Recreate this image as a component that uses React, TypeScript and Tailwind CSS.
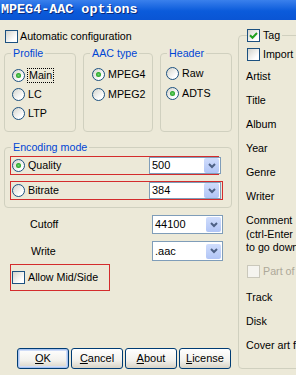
import React from "react";
import clsx from "clsx";

// Small XP-style controls
function Radio({ checked }: { checked?: boolean }) {
    return (
        <span className="flex h-[13px] w-[13px] shrink-0 items-center justify-center rounded-full border border-[#1c5180] bg-[linear-gradient(135deg,#d4d4cc,#ffffff_75%)]">
            {checked && (
                <span className="h-[5px] w-[5px] rounded-full bg-[radial-gradient(circle,#6fd56f,#21a121_70%)]" />
            )}
        </span>
    );
}

function Check({ checked, disabled }: { checked?: boolean; disabled?: boolean }) {
    return (
        <span
            className={clsx(
                "flex h-[13px] w-[13px] shrink-0 items-center justify-center border",
                disabled
                    ? "border-[#cac8bb] bg-[#f5f4ef]"
                    : "border-[#1c5180] bg-[linear-gradient(135deg,#d4d4cc,#ffffff_75%)]"
            )}
        >
            {checked && (
                <svg width="9" height="9" viewBox="0 0 9 9">
                    <path d="M1 4.2 L3.5 6.7 L8 2" fill="none" stroke="#21a121" strokeWidth="2" />
                </svg>
            )}
        </span>
    );
}

function RadioItem({ label, checked, focus }: { label: string; checked?: boolean; focus?: boolean }) {
    return (
        <div className="flex h-[13px] items-center gap-[3px]">
            <Radio checked={checked} />
            <span className={clsx("leading-[13px]", focus && "-ml-[1px] border border-dotted border-black px-[1px] leading-[11px]")}>
                {label}
            </span>
        </div>
    );
}

function Combo({ value, className }: { value: string; className?: string }) {
    return (
        <div className={clsx("flex shrink-0 items-center border border-[#7f9db9] bg-white pl-[2px] pr-[1px]", className)}>
            <span className="flex-1 text-[11px] leading-none">{value}</span>
            <span className="flex h-[15px] w-[15px] items-center justify-center rounded-[2px] bg-[linear-gradient(#d0ddfc,#b1c5f6)]">
                <svg width="8" height="6" viewBox="0 0 8 6">
                    <path d="M1 1 L4 4 L7 1" fill="none" stroke="#4d6185" strokeWidth="2" />
                </svg>
            </span>
        </div>
    );
}

function Btn({ k, rest, isDefault }: { k: string; rest: string; isDefault?: boolean }) {
    return (
        <button
            className={clsx(
                "flex h-[21px] w-[52px] items-center justify-center rounded-[3px] border border-[#003c74] bg-[linear-gradient(#ffffff,#f2f1ec_60%,#d8d3c6)] text-[11px] text-black",
                isDefault && "shadow-[inset_0_0_0_1px_#a9c4f0,inset_0_0_0_2px_#cfdcf7]"
            )}
        >
            <span>
                <u className="underline-offset-[1px]">{k}</u>
                {rest}
            </span>
        </button>
    );
}

export default function App() {
    return (
        <div className="h-[375px] w-[296px] overflow-hidden bg-[#ece9d8] font-['Liberation_Sans',sans-serif] text-[10.7px] text-black">
            {/* title bar */}
            <div className="flex h-[20px] items-center bg-[linear-gradient(#3a80ec,#0b5bdb_55%,#0a55d4)]">
                <span className="pl-[1px] font-['Liberation_Mono',monospace] text-[13.4px] font-bold leading-none text-white [text-shadow:1px_1px_0_#0a2a7a]">
                    MPEG4-AAC options
                </span>
            </div>

            <div className="flex">
                {/* left column */}
                <div className="w-[238px] shrink-0">
                    <div className="flex items-center gap-[2px] pl-[5px] pt-[10px]">
                        <Check />
                        <span className="leading-[13px]">Automatic configuration</span>
                    </div>

                    <div className="mt-[4px] flex gap-[7px] pl-[4px]">
                        <fieldset className="h-[85px] w-[72px] rounded-[4px] border border-[#d0d0bf]">
                            <legend className="ml-[6px] px-[2px] leading-[13px] text-[#0046d5]">Profile</legend>
                            <div className="flex flex-col gap-[6px] pl-[7px] pt-[9px]">
                                <RadioItem label="Main" checked focus />
                                <RadioItem label="LC" />
                                <RadioItem label="LTP" />
                            </div>
                        </fieldset>
                        <fieldset className="h-[85px] w-[70px] rounded-[4px] border border-[#d0d0bf]">
                            <legend className="ml-[6px] px-[2px] leading-[13px] text-[#0046d5]">AAC type</legend>
                            <div className="flex flex-col gap-[7px] pl-[8px] pt-[8px]">
                                <RadioItem label="MPEG4" checked />
                                <RadioItem label="MPEG2" />
                            </div>
                        </fieldset>
                        <fieldset className="h-[85px] w-[72px] rounded-[4px] border border-[#d0d0bf]">
                            <legend className="ml-[6px] px-[2px] leading-[13px] text-[#0046d5]">Header</legend>
                            <div className="flex flex-col gap-[7px] pl-[5px] pt-[7px]">
                                <RadioItem label="Raw" />
                                <RadioItem label="ADTS" checked />
                            </div>
                        </fieldset>
                    </div>

                    <fieldset className="ml-[4px] mt-[9px] h-[67px] w-[228px] rounded-[4px] border border-[#d0d0bf]">
                        <legend className="ml-[6px] px-[2px] leading-[13px] text-[#0046d5]">Encoding mode</legend>
                        <div className="ml-[5px] mt-[2px] flex h-[19px] w-[209px] items-center border border-[#d42c2c] pl-[1px]">
                            <div className="flex-1">
                                <RadioItem label="Quality" checked />
                            </div>
                            <Combo value="500" className="-mr-[3px] h-[17px] w-[72px]" />
                        </div>
                        <div className="ml-[5px] mt-[6px] flex h-[19px] w-[213px] items-center border border-[#d42c2c] pl-[1px]">
                            <div className="flex-1">
                                <RadioItem label="Bitrate" />
                            </div>
                            <Combo value="384" className="mr-[1px] h-[17px] w-[72px]" />
                        </div>
                    </fieldset>

                    <div className="mt-[7px] flex items-center pl-[30px]">
                        <span className="w-[122px]">Cutoff</span>
                        <Combo value="44100" className="h-[19px] w-[71px]" />
                    </div>
                    <div className="mt-[7px] flex items-center pl-[31px]">
                        <span className="w-[121px]">Write</span>
                        <Combo value=".aac" className="h-[20px] w-[71px]" />
                    </div>

                    <div className="ml-[10px] mt-[3px] flex h-[27px] w-[100px] items-center gap-[3px] border border-[#d42c2c] pl-[1px]">
                        <Check />
                        <span>Allow Mid/Side</span>
                    </div>

                    <div className="mt-[57px] flex gap-[2px] pl-[17px]">
                        <Btn k="O" rest="K" isDefault />
                        <Btn k="C" rest="ancel" />
                        <Btn k="A" rest="bout" />
                        <Btn k="L" rest="icense" />
                    </div>
                </div>

                {/* tag column */}
                <div className="pt-[9px]">
                    <fieldset className="h-[340px] w-[90px] rounded-[4px] border border-[#d0d0bf]">
                        <legend className="ml-[8px] flex items-center gap-[3px] pr-[2px]">
                            <Check checked />
                            <span className="leading-[13px]">Tag</span>
                        </legend>
                        <div className="flex flex-col pl-[7px]">
                            <div className="ml-[1px] mt-[6px] flex items-center gap-[3px]">
                                <Check />
                                <span className="leading-[13px]">Import</span>
                            </div>
                            <div className="mt-[3px] flex h-[24px] items-center">Artist</div>
                            <div className="flex h-[24px] items-center">Title</div>
                            <div className="flex h-[24px] items-center">Album</div>
                            <div className="flex h-[24px] items-center">Year</div>
                            <div className="flex h-[24px] items-center">Genre</div>
                            <div className="flex h-[24px] items-center">Writer</div>
                            <div className="mt-[6px] whitespace-nowrap leading-[13.5px]">
                                <div>Comment</div>
                                <div>(ctrl-Enter</div>
                                <div>to go down</div>
                            </div>
                            <div className="ml-[1px] mt-[10px] flex items-center gap-[3px] whitespace-nowrap text-[#aca899]">
                                <Check disabled />
                                <span className="leading-[13px]">Part of set</span>
                            </div>
                            <div className="mt-[8px] flex h-[24px] items-center">Track</div>
                            <div className="flex h-[24px] items-center">Disk</div>
                            <div className="flex h-[24px] items-center whitespace-nowrap">Cover art file</div>
                        </div>
                    </fieldset>
                </div>
            </div>
        </div>
    );
}
